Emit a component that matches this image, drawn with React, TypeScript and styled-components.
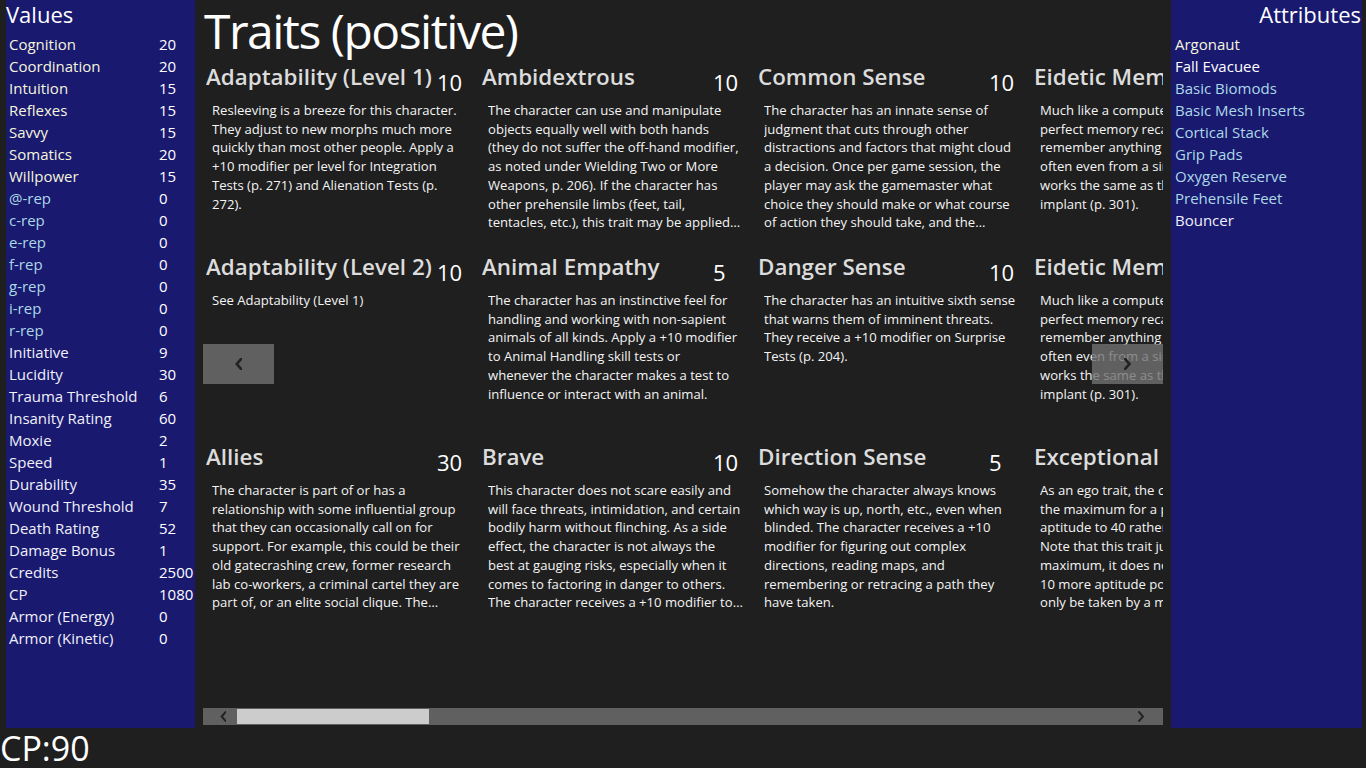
import React from 'react'
import styled, { createGlobalStyle } from 'styled-components'

const GlobalStyle = createGlobalStyle`
  html, body {
    margin: 0;
    padding: 0;
    background: #1f1f1f;
    overflow: hidden;
  }
  * {
    box-sizing: border-box;
  }
`

const FONT = `"Open Sans", "Noto Sans", "Liberation Sans", sans-serif`

interface IValue {
  name: string;
  value: number;
  kind: 'aptitude' | 'rep' | 'stat';
}

interface IAttribute {
  name: string;
  kind: 'background' | 'faction' | 'trait' | 'morph';
}

interface ITrait {
  title: string;
  cost: number;
  text: string;
}

const values: IValue[] = [
  { name: 'Cognition', value: 20, kind: 'aptitude' },
  { name: 'Coordination', value: 20, kind: 'aptitude' },
  { name: 'Intuition', value: 15, kind: 'aptitude' },
  { name: 'Reflexes', value: 15, kind: 'aptitude' },
  { name: 'Savvy', value: 15, kind: 'aptitude' },
  { name: 'Somatics', value: 20, kind: 'aptitude' },
  { name: 'Willpower', value: 15, kind: 'aptitude' },
  { name: '@-rep', value: 0, kind: 'rep' },
  { name: 'c-rep', value: 0, kind: 'rep' },
  { name: 'e-rep', value: 0, kind: 'rep' },
  { name: 'f-rep', value: 0, kind: 'rep' },
  { name: 'g-rep', value: 0, kind: 'rep' },
  { name: 'i-rep', value: 0, kind: 'rep' },
  { name: 'r-rep', value: 0, kind: 'rep' },
  { name: 'Initiative', value: 9, kind: 'stat' },
  { name: 'Lucidity', value: 30, kind: 'stat' },
  { name: 'Trauma Threshold', value: 6, kind: 'stat' },
  { name: 'Insanity Rating', value: 60, kind: 'stat' },
  { name: 'Moxie', value: 2, kind: 'stat' },
  { name: 'Speed', value: 1, kind: 'stat' },
  { name: 'Durability', value: 35, kind: 'stat' },
  { name: 'Wound Threshold', value: 7, kind: 'stat' },
  { name: 'Death Rating', value: 52, kind: 'stat' },
  { name: 'Damage Bonus', value: 1, kind: 'stat' },
  { name: 'Credits', value: 2500, kind: 'stat' },
  { name: 'CP', value: 1080, kind: 'stat' },
  { name: 'Armor (Energy)', value: 0, kind: 'stat' },
  { name: 'Armor (Kinetic)', value: 0, kind: 'stat' },
]

const attributes: IAttribute[] = [
  { name: 'Argonaut', kind: 'background' },
  { name: 'Fall Evacuee', kind: 'faction' },
  { name: 'Basic Biomods', kind: 'morph' },
  { name: 'Basic Mesh Inserts', kind: 'morph' },
  { name: 'Cortical Stack', kind: 'morph' },
  { name: 'Grip Pads', kind: 'morph' },
  { name: 'Oxygen Reserve', kind: 'morph' },
  { name: 'Prehensile Feet', kind: 'morph' },
  { name: 'Bouncer', kind: 'trait' },
]

const eidetic = 'Much like a computer, the character has perfect memory recall. They can remember anything they have sensed, often even from a single exposure. This works the same as the eidetic memory implant (p. 301).'

// \u00a0 keeps a few words together so the lines break where the app breaks them
const traits: ITrait[] = [
  { title: 'Adaptability (Level 1)', cost: 10, text: 'Resleeving is a breeze for this character. They adjust to new morphs much more quickly than most other people. Apply a +10 modifier per level for Integration Tests (p. 271) and Alienation Tests (p. 272).' },
  { title: 'Adaptability (Level 2)', cost: 10, text: 'See Adaptability (Level 1)' },
  { title: 'Allies', cost: 30, text: 'The character is part of or has a relationship with some influential group that they can occasionally call on for support. For example, this could be their old gatecrashing crew, former research lab co-workers, a criminal cartel they are part of, or an elite social clique. The character may call on them for favors.' },
  { title: 'Ambidextrous', cost: 10, text: 'The character can use and manipulate objects equally well with both hands (they\u00a0do not suffer the off-hand modifier, as noted under Wielding Two or More Weapons, p. 206). If the character has other prehensile limbs (feet, tail, tentacles, etc.), this trait may be applied to those as well.' },
  { title: 'Animal Empathy', cost: 5, text: 'The character has an instinctive feel for handling and working with non-sapient animals of all kinds. Apply a +10 modifier to Animal Handling skill tests or whenever the character makes a test to influence or interact with an animal.' },
  { title: 'Brave', cost: 10, text: 'This character does not scare easily and will face threats, intimidation, and certain bodily harm without flinching. As a side effect, the character is not always the best at gauging risks, especially when it comes to factoring in danger to others. The character receives a +10 modifier to resist fear.' },
  { title: 'Common Sense', cost: 10, text: 'The character has an innate sense of judgment that cuts through other distractions and factors that might cloud a decision. Once per game session, the player may ask the gamemaster what choice they should make or what course of action they should take, and the gamemaster should answer honestly.' },
  { title: 'Danger Sense', cost: 10, text: 'The character has an intuitive sixth sense that warns them of imminent threats. They receive a +10 modifier on Surprise Tests (p. 204).' },
  { title: 'Direction Sense', cost: 5, text: 'Somehow the character always knows which way is up, north, etc., even when blinded. The character receives a +10 modifier for figuring out complex directions, reading maps, and remembering or retracing a path they have taken.' },
  { title: 'Eidetic Memory', cost: 10, text: eidetic },
  { title: 'Eidetic Memory', cost: 10, text: eidetic },
  { title: 'Exceptional Aptitude', cost: 20, text: 'As an ego trait, the character may raise the maximum for a particular aptitude\u00a0to\u00a040 rather than 30. Note\u00a0that\u00a0this\u00a0trait just raises the maximum, it does not give the character 10\u00a0more aptitude points. This trait may only\u00a0be taken by a morph that allows it.' },
  { title: 'Fast Learner', cost: 10, text: 'The character picks up new skills quickly.' },
  { title: 'First Impression', cost: 10, text: 'The character always makes a good first impression.' },
  { title: 'Hyper Linguist', cost: 10, text: 'The character has a knack for learning new languages.' },
]

const labelColor: Record<IValue['kind'], string> = {
  aptitude: '#f5f5dc',
  rep: '#add8e6',
  stat: '#f0f0f8',
}

const attrColor: Record<IAttribute['kind'], string> = {
  background: '#f5f5dc',
  faction: '#ffffff',
  morph: '#add8e6',
  trait: '#f0f0f8',
}

const Page = styled.div`
  width: 1366px;
  height: 768px;
  display: grid;
  grid-template-columns: minmax(0, 1fr);
  grid-template-rows: 728px 40px;
  background: #1f1f1f;
  font-family: ${FONT};
  color: #ffffff;
  overflow: hidden;
`

const Top = styled.div`
  display: flex;
  min-width: 0;
  min-height: 0;
  overflow: hidden;
`

const Sidebar = styled.aside<{ $side: 'left' | 'right' }>`
  flex: 0 0 auto;
  width: ${p => p.$side === 'left' ? '189px' : '191px'};
  margin: ${p => p.$side === 'left' ? '0 1px 0 6px' : '0 4px 0 1px'};
  background: #191970;
  padding: ${p => p.$side === 'left' ? '0 0 0 3px' : '0 1px 0 4px'};
  display: flex;
  flex-direction: column;
`

const SideHeader = styled.div<{ $align: 'left' | 'right' }>`
  font-size: 22px;
  line-height: 28px;
  height: 33px;
  text-align: ${p => p.$align};
  margin-left: ${p => p.$align === 'left' ? '-3px' : '0'};
`

const ValueRow = styled.div`
  display: grid;
  grid-template-columns: 150px 1fr;
  height: 22px;
  line-height: 22px;
  font-size: 15px;
`

const ValueName = styled.span<{ $color: string }>`
  color: ${p => p.$color};
  white-space: nowrap;
`

const ValueNumber = styled.span`
  color: #ffffff;
`

const AttrRow = styled.div<{ $color: string }>`
  height: 22px;
  line-height: 22px;
  font-size: 15px;
  color: ${p => p.$color};
  white-space: nowrap;
`

const Main = styled.main`
  flex: 1 1 0;
  min-width: 0;
  display: flex;
  flex-direction: column;
  padding: 0 7px 3px 7px;
`

const Title = styled.h1`
  margin: 0;
  height: 62px;
  font-size: 48px;
  letter-spacing: -1.5px;
  font-weight: 400;
  line-height: 62px;
  padding-left: 1px;
  color: #ffffff;
  white-space: nowrap;
`

const Viewer = styled.div`
  position: relative;
  flex: 1;
  min-width: 0;
  overflow: hidden;
`

const Grid = styled.div`
  display: grid;
  grid-template-rows: repeat(3, 190px);
  grid-auto-flow: column;
  grid-auto-columns: 276px;
  padding-left: 3px;
  width: max-content;
`

const Card = styled.div`
  display: flex;
  flex-direction: column;
  min-width: 0;
`

const CardHead = styled.div`
  display: grid;
  grid-template-columns: 229px 1fr;
  column-gap: 2px;
  align-items: start;
  height: 39px;
`

const CardTitle = styled.div`
  min-width: 0;
  font-size: 22.4px;
  font-weight: 600;
  line-height: 30px;
  color: #dcdcdc;
  white-space: nowrap;
  overflow: hidden;
  text-overflow: ellipsis;
`

const CardCost = styled.div`
  font-size: 22px;
  line-height: 30px;
  margin-top: 5px;
  color: #ffffff;
`

const CardText = styled.div`
  margin-left: 6px;
  width: 255px;
  font-size: 13.1px;
  line-height: 18.7px;
  color: #f4f4f4;
  display: -webkit-box;
  -webkit-line-clamp: 7;
  -webkit-box-orient: vertical;
  overflow: hidden;
`

const NavButton = styled.div<{ $side: 'left' | 'right' }>`
  position: absolute;
  top: 282px;
  ${p => p.$side === 'left' ? 'left: 0;' : 'right: 0;'}
  width: 71px;
  height: 40px;
  background: rgba(112, 112, 112, 0.8);
  display: flex;
  align-items: center;
  justify-content: center;
`

const ScrollBar = styled.div`
  height: 17px;
  margin-top: 2px;
  background: #606060;
  display: flex;
  align-items: center;
`

const ScrollArrow = styled.div<{ $side: 'left' | 'right' }>`
  width: 34px;
  height: 17px;
  display: flex;
  align-items: center;
  justify-content: center;
  padding: ${p => p.$side === 'left' ? '0 0 0 6px' : '0 10px 0 0'};
`

const ScrollTrack = styled.div`
  flex: 1;
  height: 15px;
  position: relative;
`

const ScrollThumb = styled.div`
  position: absolute;
  top: 0;
  height: 15px;
  background: #cccccc;
`

const Footer = styled.div`
  font-size: 34px;
  line-height: 40px;
  padding-left: 0;
  color: #ffffff;
`

const Chevron: React.FC<{ dir: 'left' | 'right'; size: number; weight: number; color: string }> = ({ dir, size, weight, color }) => (
  <svg width={size * 0.6} height={size} viewBox="0 0 6 10">
    <path
      d={dir === 'left' ? 'M5 1 L1.5 5 L5 9' : 'M1 1 L4.5 5 L1 9'}
      fill="none"
      stroke={color}
      strokeWidth={weight}
      strokeLinecap="square"
    />
  </svg>
)

const App: React.FC = () => {
  const thumbLeft = 0
  const thumbWidth = 192

  return (
    <Page>
      <GlobalStyle />
      <Top>
        <Sidebar $side="left">
          <SideHeader $align="left">Values</SideHeader>
          {values.map(v => (
            <ValueRow key={v.name}>
              <ValueName $color={labelColor[v.kind]}>{v.name}</ValueName>
              <ValueNumber>{v.value}</ValueNumber>
            </ValueRow>
          ))}
        </Sidebar>
        <Main>
          <Title>Traits (positive)</Title>
          <Viewer>
            <Grid>
              {traits.map((t, i) => (
                <Card key={i}>
                  <CardHead>
                    <CardTitle>{t.title}</CardTitle>
                    <CardCost>{t.cost}</CardCost>
                  </CardHead>
                  <CardText>{t.text}</CardText>
                </Card>
              ))}
            </Grid>
            <NavButton $side="left">
              <Chevron dir="left" size={12} weight={2.2} color="#222222" />
            </NavButton>
            <NavButton $side="right">
              <Chevron dir="right" size={12} weight={2.2} color="#222222" />
            </NavButton>
          </Viewer>
          <ScrollBar>
            <ScrollArrow $side="left">
              <Chevron dir="left" size={11} weight={1.8} color="#222222" />
            </ScrollArrow>
            <ScrollTrack>
              <ScrollThumb style={{ left: thumbLeft, width: thumbWidth }} />
            </ScrollTrack>
            <ScrollArrow $side="right">
              <Chevron dir="right" size={11} weight={1.8} color="#222222" />
            </ScrollArrow>
          </ScrollBar>
        </Main>
        <Sidebar $side="right">
          <SideHeader $align="right">Attributes</SideHeader>
          {attributes.map(a => (
            <AttrRow key={a.name} $color={attrColor[a.kind]}>{a.name}</AttrRow>
          ))}
        </Sidebar>
      </Top>
      <Footer>CP:90</Footer>
    </Page>
  )
}

export default App
